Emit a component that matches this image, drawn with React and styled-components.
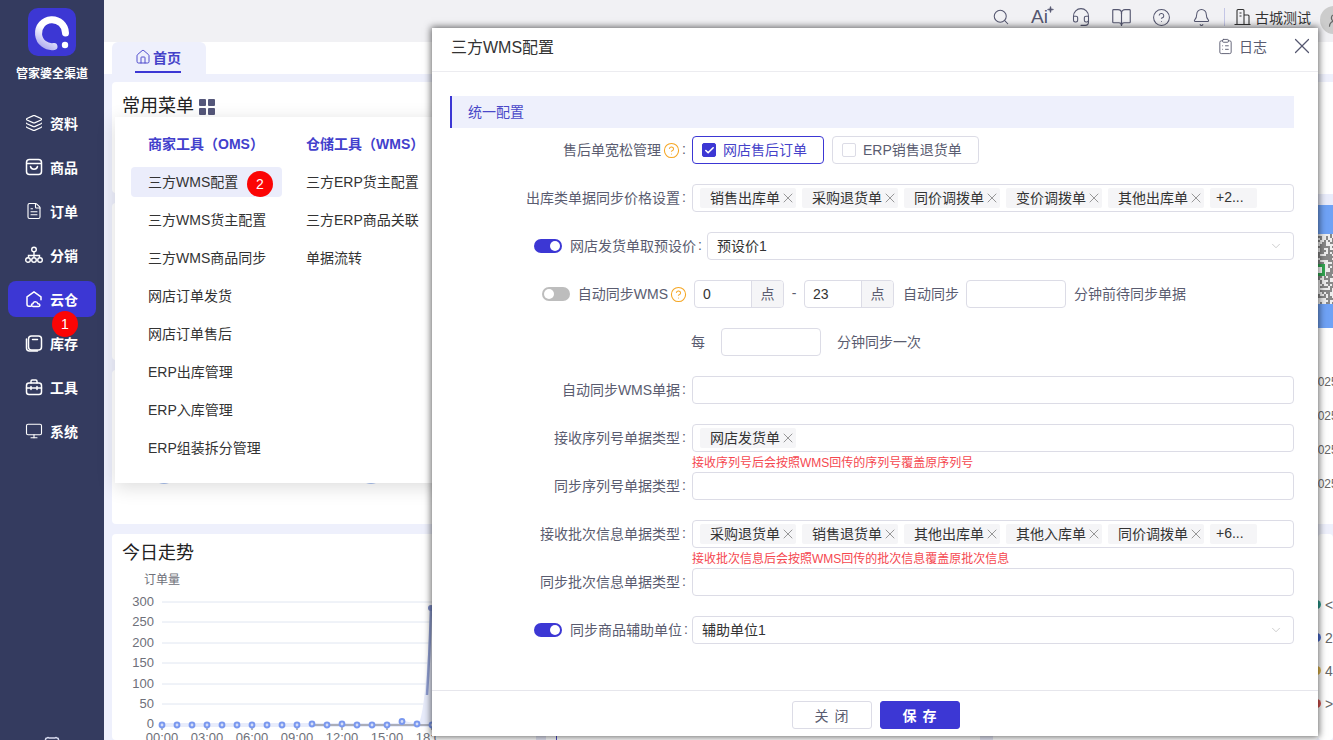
import React from "react";
import styled, { createGlobalStyle } from "styled-components";
import {
  Search, Headset, BookOpen, CircleHelp, Bell, ClipboardList, X, Layers,
  FileText, Monitor, Check, ChevronDown, House, UserRound, Sparkle,
} from "lucide-react";

const Global = createGlobalStyle`
  html, body { margin: 0; padding: 0; background: #fff; }
  * { box-sizing: border-box; }
  body { font-family: "Liberation Sans", "Noto Sans CJK SC", sans-serif; font-size: 14px; color: #333; }
`;

const Page = styled.div`
  position: relative; width: 1333px; height: 740px; overflow: hidden; display: flex;
`;
const Sidebar = styled.aside`
  width: 104px; flex: none; background: #343b5f; color: #fff;
  display: flex; flex-direction: column; align-items: center; padding-top: 8px; position: relative;
`;
const LogoBox = styled.div`width: 48px; height: 48px; border-radius: 10px; background: #3c37d4; display: flex;`;
const Brand = styled.div`font-size: 12px; font-weight: 700; line-height: 20px; margin-top: 8px; margin-bottom: 21px;`;
const NavList = styled.nav`display: flex; flex-direction: column; gap: 8px; width: 88px;`;
const NavItem = styled.div`
  height: 36px; border-radius: 8px; display: flex; align-items: center; gap: 7px; padding-left: 17px;
  font-weight: 700; font-size: 14px; background: ${p => (p.$active ? "#3c37d4" : "transparent")};
`;
const FootIcon = styled.div`margin-top: auto; height: 8px; margin-bottom: -3px; overflow: visible;`;
const Badge = styled.div`
  position: absolute; width: 26px; height: 26px; border-radius: 50%; background: #fb0505; color: #fff;
  font-size: 14px; display: flex; align-items: center; justify-content: center;
  left: ${p => p.$x}px; top: ${p => p.$y}px;
`;

const Main = styled.main`flex: 1; min-width: 0; display: flex; flex-direction: column; background: #eef0fc;`;
const TopBar = styled.header`
  height: 42px; flex: none; background: #f1f1f4; display: flex; align-items: flex-start; justify-content: flex-end;
  padding-top: 6px; color: #555770; overflow: hidden;
`;
const TopIcons = styled.div`display: flex; align-items: center; height: 22px;`;
const TopSlot = styled.span`width: 40px; display: flex; justify-content: center; align-items: center; height: 22px;`;
const AiMark = styled.span`
  font-size: 19px; line-height: 22px; color: #555770; position: relative; width: 20px; display: block;
  svg { position: absolute; right: -3px; top: 0; }
`;
const TopDivider = styled.i`width: 1px; height: 18px; background: #c4c6e6; margin: 2px 9px 0 3px;`;
const TopUser = styled.div`display: flex; align-items: center; gap: 4px; color: #333; height: 22px;`;
const Avatar = styled.div`
  width: 28px; height: 28px; border-radius: 50%; background: #ccc; margin-left: 9px; margin-right: -15px; flex: none;
  display: flex; align-items: center; justify-content: center; color: #666;
`;
const TabRow = styled.div`height: 32px; flex: none; background: #fff; padding-left: 8px; display: flex;`;
const Tab = styled.div`
  width: 94px; height: 32px; background: #eef0fc; border-radius: 6px 6px 0 0; display: flex; align-items: flex-start;
  padding-left: 23px;
`;
const TabInner = styled.div`
  display: flex; align-items: center; gap: 2px; height: 31px; width: 46px; border-bottom: 2px solid #3c37d4;
  font-weight: 700; color: #4542c9; white-space: nowrap; font-size: 14px; padding-top: 1px;
`;
const Content = styled.div`flex: 1; display: flex; padding: 8px 0 0 8px; min-height: 0;`;
const LeftCol = styled.div`flex: 1; min-width: 0; display: flex; flex-direction: column;`;
const Card = styled.section`
  background: #fff; border-radius: 4px; flex: none; height: ${p => p.$h}px; margin-bottom: 10px;
`;
const GrowCard = styled(Card)`flex: 1; height: auto; margin-bottom: 0; overflow: hidden;`;
const CardTitle = styled.h3`
  margin: 0; padding: 12px 0 0 10px; font-size: 18px; line-height: 25px; font-weight: 400; color: #222;
  display: flex; align-items: center; gap: 5px;
`;
const CardTitleTight = styled(CardTitle)`padding-top: 7px;`;
const PeekRow = styled.div`display: flex; gap: 185px; padding: 92px 0 0 41px;`;
const PeekDot = styled.i`width: 22px; height: 22px; border-radius: 50%; background: #a9c0ee; display: block;`;
const RightCol = styled.div`width: 15px; flex: none; display: flex; flex-direction: column;`;
const RightCard = styled.section`
  background: #fff; height: 442px; overflow: hidden; padding-top: 112px; margin-bottom: 10px;
`;
const Banner = styled.div`
  height: 134px; display: flex; flex-direction: column; background: #6fa2f5;
  border-top: 11px solid #e9ecfb;
`;
const BannerQr = styled.svg`display: block; margin-top: 29px;`;
const DateList = styled.div`display: flex; flex-direction: column; gap: 14px; padding-top: 44px;`;
const DateCell = styled.div`
  font-size: 12px; color: #666; line-height: 20px; text-indent: -7px; white-space: nowrap;
`;
const RightStats = styled(Card)`flex: 1; height: auto; margin: 0; padding-top: 61px;`;
const StatLine = styled.div`
  font-size: 14px; color: #666; line-height: 20px; margin-bottom: 13px; padding-left: 7px; position: relative;
`;
const StatDot = styled.i`
  position: absolute; left: -6px; top: 5px; width: 9px; height: 9px; border-radius: 50%; background: ${p => p.$c};
`;
const BottomPeek = styled.div`
  position: absolute; left: ${p => p.$x}px; top: 736px; width: ${p => p.$w}px; height: 4px; background: ${p => p.$c};
`;

const Drop = styled.div`
  position: absolute; left: 115px; top: 117px; width: 330px; height: 366px; background: #fff;
  box-shadow: 0 4px 18px rgba(0,0,0,.14); display: flex; padding: 14px 0 0 16px;
`;
const DropCol = styled.div`width: 158px; flex: none; display: flex; flex-direction: column;`;
const DropHead = styled.div`
  font-weight: 700; color: #4240cc; line-height: 26px; padding-left: 17px; margin-bottom: 10px; white-space: nowrap;
`;
const DropItem = styled.div`
  width: 151px; height: 30px; line-height: 30px; padding-left: 17px; margin-bottom: 8px; border-radius: 4px; white-space: nowrap;
  background: ${p => (p.$active ? "#ebedfb" : "transparent")}; color: #333;
`;

const Modal = styled.div`
  position: absolute; left: 432px; top: 28px; width: 886px; height: 708px; background: #fff;
  box-shadow: 0 0 7px 1px rgba(0,0,0,.6); display: flex; flex-direction: column;
`;
const ModalHead = styled.div`
  height: 44px; flex: none; border-bottom: 1px solid #ececf0; display: flex; align-items: center; padding: 0 3px 7px 19px; color: #333;
`;
const ModalTitle = styled.div`font-size: 16px; flex: 1;`;
const LogLink = styled.div`display: flex; align-items: center; gap: 5px; color: #5a5c70; margin-right: 22px;`;
const CloseBtn = styled.div`display: flex; color: #555770;`;
const ModalBody = styled.div`flex: 1; padding: 24px 24px 0 18px; display: flex; flex-direction: column;`;
const Section = styled.div`
  height: 32px; line-height: 32px; background: #eef0fc; border-left: 2px solid #3c37d4; padding-left: 16px; color: #4a48c8; margin-bottom: 8px;
`;
const Row = styled.div`
  display: flex; align-items: flex-start; gap: ${p => p.$gap ?? 6}px; margin-bottom: ${p => p.$mb ?? 20}px;
`;
const Label = styled.div`
  width: ${p => p.$w ?? 236}px; flex: none; height: 28px; display: flex; align-items: center; justify-content: flex-end;
  color: #5a5c70; white-space: nowrap; padding-bottom: 2px;
`;
const Colon = styled.span`margin-left: 2px;`;
const Help = styled.span`display: inline-flex; color: #f5a623; margin: 2px 0 0 2px;`;
const Toggle = styled.span`
  width: 28px; height: 14px; border-radius: 7px; flex: none; margin: 2px 8px 0 0; position: relative; display: block;
  background: ${p => (p.$on ? "#3c37d4" : "#bdbdbd")};
  &::after {
    content: ""; position: absolute; top: 2px; width: 10px; height: 10px; border-radius: 50%; background: #fff;
    left: ${p => (p.$on ? "16px" : "2px")};
  }
`;
const Field = styled.div`flex: 1; min-width: 0; display: flex; flex-direction: column;`;
const BoxInput = styled.div`
  height: 28px; border: 1px solid #dcdce6; border-radius: 4px; background: #fff; display: flex; align-items: center;
  padding-left: 7px; gap: 6px; color: #333; overflow: hidden;
`;
const SelectBox = styled(BoxInput)`
  padding: 0 10px 2px 9px; justify-content: space-between; color: #333;
  svg { margin-top: 2px; }
`;
const Tag = styled.span`
  height: 20px; width: 96px; background: #f5f5f7; border-radius: 2px; display: inline-flex; align-items: center; padding: 0 0 2px 10px; white-space: nowrap; flex: none;
  color: #333; svg { color: #666; flex: none; margin-top: 2px; }
`;
const MoreTag = styled(Tag)`padding: 0 0 2px 6px; width: 47px;`;
const Hint = styled.div`height: 20px; line-height: 22px; font-size: 12px; color: #f5474f;`;
const CheckGroup = styled.div`display: flex; gap: 8px;`;
const CheckCard = styled.div`
  height: 28px; border: 1px solid ${p => (p.$on ? "#3c37d4" : "#dcdce6")}; border-radius: 4px; display: flex; align-items: center;
  padding: 0 16px 2px 9px; gap: 7px; color: ${p => (p.$on ? "#4542c9" : "#5a5c70")}; white-space: nowrap;
`;
const CheckMark = styled.span`
  width: 14px; height: 14px; border-radius: 2px; display: flex; align-items: center; justify-content: center; color: #fff; margin-top: 2px;
  background: ${p => (p.$on ? "#3c37d4" : "#fff")}; border: 1px solid ${p => (p.$on ? "#3c37d4" : "#dcdce6")};
`;
const Inline = styled.div`display: flex; align-items: center; height: 28px; color: #5a5c70; white-space: nowrap;`;
const Addon = styled.div`
  display: flex; height: 28px; width: 90px; border: 1px solid #dcdce6; border-radius: 4px; overflow: hidden; color: #333; flex: none;
`;
const AddonVal = styled.div`flex: 1; display: flex; align-items: center; padding: 0 0 1px 8px;`;
const AddonEnd = styled.div`
  width: 32px; background: #f5f5f7; border-left: 1px solid #dcdce6; display: flex; align-items: center; justify-content: center; color: #5a5c70; padding-bottom: 2px;
`;
const DashGap = styled.span`width: 20px; text-align: center; color: #5a5c70; flex: none; margin-top: -2px;`;
const Plain = styled.div`
  width: 100px; height: 28px; border: 1px solid #dcdce6; border-radius: 4px; flex: none;
  margin: 0 ${p => p.$mr ?? 8}px 0 ${p => p.$ml ?? 7}px;
`;
const InlineText = styled.span`margin: -2px 0 0 ${p => p.$ml ?? 0}px;`;
const ModalFoot = styled.div`
  height: 46px; flex: none; border-top: 1px solid #e6e6ec; display: flex; align-items: flex-start; justify-content: center;
  gap: 8px; padding: 10px 0 0 2px;
`;
const FootBtn = styled.button`
  width: 80px; height: 28px; border-radius: 3px; font: inherit; font-size: 14px; letter-spacing: 1px; padding: 0 0 1px;
  border: 1px solid ${p => (p.$primary ? "#3c37d4" : "#dcdce6")};
  background: ${p => (p.$primary ? "#3c37d4" : "#fff")};
  color: ${p => (p.$primary ? "#fff" : "#5a5c70")};
  font-weight: ${p => (p.$primary ? 700 : 400)};
`;
const ChartSvg = styled.svg`display: block; margin-top: 4px;`;

const IconShop = () => (
  <svg width="18" height="18" viewBox="0 0 18 18" fill="none" stroke="#fff" strokeWidth="1.5">
    <rect x="1.5" y="1.5" width="15" height="15" rx="3" />
    <path d="M2 5.5h14M5.5 8.5c.8 3.6 6.200 3.600 7 0" strokeLinecap="round" />
  </svg>
);
const IconNet = () => (
  <svg width="18" height="18" viewBox="0 0 18 18" fill="none" stroke="#fff" strokeWidth="1.4">
    <circle cx="9" cy="3.500" r="2.300" /><circle cx="3" cy="14" r="2.300" /><circle cx="9" cy="14" r="2.300" /><circle cx="15" cy="14" r="2.300" />
    <path d="M9 6v5.500M3.500 11.500V9.500h11v2" />
  </svg>
);
const IconCloud = () => (
  <svg width="18" height="18" viewBox="0 0 18 18" fill="none" stroke="#fff" strokeWidth="1.5" strokeLinecap="round" strokeLinejoin="round">
    <path d="M6 16.200H4a2 2 0 0 1-2-2V6.800l7-5 7 5v3" />
    <path d="M8 16.500c-2 0-2-2.800 0-2.800.3-2.500 4.400-2.500 4.800 0 2.200-.3 3 2.800.5 2.800z" />
  </svg>
);
const IconStock = () => (
  <svg width="18" height="18" viewBox="0 0 18 18" fill="none" stroke="#fff" strokeWidth="1.5" strokeLinecap="round">
    <rect x="3.500" y="2" width="13" height="14" rx="3" />
    <path d="M1.500 5v9a3 3 0 0 0 3 3h8M7.500 5.500h5" />
  </svg>
);
const IconBox = () => (
  <svg width="18" height="18" viewBox="0 0 18 18" fill="none" stroke="#fff" strokeWidth="1.5" strokeLinecap="round">
    <rect x="1.500" y="5" width="15" height="11.500" rx="2.500" />
    <path d="M6 5V3.200C6 2.500 6.500 2 7.200 2h3.600c.7 0 1.200.5 1.200 1.200V5M1.500 10h15M6 8.500v3M12 8.500v3" />
  </svg>
);
const IconBear = () => (
  <svg width="16" height="16" viewBox="0 0 16 16" fill="none" stroke="#d9dcf0" strokeWidth="1.500">
    <path d="M3 3c-2 0-2 3 0 3v6a3 3 0 0 0 3 3h4a3 3 0 0 0 3-3V6c2 0 2-3 0-3-1-1-2 0-2 0H5S4 2 3 3z" />
  </svg>
);
const IconBuilding = () => (
  <svg width="17" height="18" viewBox="0 0 17 18" fill="none" stroke="currentColor" strokeWidth="1.1">
    <path d="M3 16.500V2.500C3 1.900 3.400 1.500 4 1.500h5c.6 0 1 .4 1 1v14M10 7h4c.6 0 1 .4 1 1v8.500M.5 16.500h16M5.500 5h2M5.500 8h2" />
  </svg>
);
const Logo = () => (
  <svg width="48" height="48" viewBox="0 0 48 48" fill="none">
    <defs>
      <linearGradient id="lg" x1="0" y1="1" x2="0.6" y2="0">
        <stop offset="0" stopColor="#a9a6ee" />
        <stop offset="0.6" stopColor="#fff" />
      </linearGradient>
    </defs>
    <path d="M26 38.500A13.500 13.500 0 1 1 37.500 25" stroke="url(#lg)" strokeWidth="7" strokeLinecap="round" />
    <circle cx="37" cy="37" r="3.200" fill="#fff" />
  </svg>
);
const Grid4 = () => (
  <svg width="16" height="16" viewBox="0 0 16 16" fill="#55577a">
    <rect width="7" height="7" rx="1" /><rect x="9" width="7" height="7" rx="1" />
    <rect y="9" width="7" height="7" rx="1" /><rect x="9" y="9" width="7" height="7" rx="1" />
  </svg>
);

const qrCells = [];
for (let r = 0; r < 35; r++) {
  for (let c = 0; c < 8; c++) {
    const n = Math.sin(r * 12.9898 + c * 78.233) * 43758.5453;
    if (n - Math.floor(n) > 0.5) qrCells.push([c, r]);
  }
}
const QrStrip = () => (
  <BannerQr width="15" height="70" viewBox="0 0 15 70">
    <rect width="15" height="70" fill="#eee" />
    {qrCells.map(([c, r]) => <rect key={`${c}-${r}`} x={c * 2} y={r * 2} width="2" height="2" fill="#888" />)}
    <rect y="30" width="7" height="12" fill="#34a853" />
    <rect x="0" y="33" width="4" height="6" fill="#fff" />
  </BannerQr>
);

const chartRows = [[300, 32], [250, 52], [200, 73], [150, 93], [100, 114], [50, 134]];
const BASE = 155;
const pts = Array.from({ length: 19 }, (_, k) => {
  const v = { 10: 1, 12: 1, 16: 3.500, 17: 1 }[k] || 0;
  return [50 + 15 * k, BASE - v];
});
const Chart = () => (
  <ChartSvg width="325" height="175" viewBox="0 0 325 175">
    <text x="32" y="14" fontSize="12" fill="#6e7079">订单量</text>
    {chartRows.map(([v, y]) => (
      <g key={v}>
        <line x1="50" x2="325" y1={y} y2={y} stroke="#e0e6f1" />
        <text x="42" y={y + 4} fontSize="13" textAnchor="end" fill="#6e7079">{v}</text>
      </g>
    ))}
    <text x="42" y={BASE + 3} fontSize="13" textAnchor="end" fill="#6e7079">0</text>
    <path d={`M50 ${BASE + 2}V${BASE - 2}H285L293 ${BASE - 4}L305 ${BASE - 1}C312 ${BASE} 315 100 319 38L325 ${BASE + 2}Z`} fill="#e8ecfb" />
    <path d={`M200 ${BASE}H320`} stroke="#6e7079" />
    {[0, 1, 2, 3, 4, 5, 6].map(i => <line key={i} x1={50 + 45 * i} x2={50 + 45 * i} y1={BASE} y2={BASE + 5} stroke="#6e7079" />)}
    {["00:00", "03:00", "06:00", "09:00", "12:00", "15:00", "18:00", "21:00"].map((t, i) => (
      <text key={t} x={50 + 45 * i} y="172" fontSize="13" textAnchor="middle" fill="#6e7079">{t}</text>
    ))}
    <path d={`M315 ${BASE - 30}C316 110 318 70 319 38`} stroke="#8f9ed2" strokeWidth="2.500" fill="none" />
    {pts.map(([x, y]) => <circle key={x} cx={x} cy={y} r="2.400" fill="#d6def8" stroke="#7a98ef" strokeWidth="2" />)}
    <circle cx="319" cy="38" r="3" fill="#7c8cc8" />
  </ChartSvg>
);

const TagX = () => <X size={16} strokeWidth={1} />;
const Tags = ({ items, more }) => (
  <BoxInput>
    {items.map(t => <Tag key={t}>{t}<TagX /></Tag>)}
    {more && <MoreTag>{more}</MoreTag>}
  </BoxInput>
);
const HelpIcon = () => <Help><CircleHelp size={17} strokeWidth={1.5} /></Help>;

const nav = [
  ["资料", <Layers size={18} strokeWidth={1.5} />],
  ["商品", <IconShop />],
  ["订单", <FileText size={18} strokeWidth={1.5} />],
  ["分销", <IconNet />],
  ["云仓", <IconCloud />, true],
  ["库存", <IconStock />],
  ["工具", <IconBox />],
  ["系统", <Monitor size={18} strokeWidth={1.5} />],
];
const col1 = ["三方WMS配置", "三方WMS货主配置", "三方WMS商品同步", "网店订单发货", "网店订单售后", "ERP出库管理", "ERP入库管理", "ERP组装拆分管理"];
const col2 = ["三方ERP货主配置", "三方ERP商品关联", "单据流转"];

export default function App() {
  return (
    <Page>
      <Global />
      <Sidebar>
        <LogoBox><Logo /></LogoBox>
        <Brand>管家婆全渠道</Brand>
        <NavList>
          {nav.map(([t, ic, a]) => <NavItem key={t} $active={a}>{ic}<span>{t}</span></NavItem>)}
        </NavList>
        <FootIcon><IconBear /></FootIcon>
      </Sidebar>
      <Main>
        <TopBar>
          <TopIcons>
            <TopSlot><Search size={18} strokeWidth={1.4} /></TopSlot>
            <TopSlot><AiMark>Ai<Sparkle size={7} fill="currentColor" /></AiMark></TopSlot>
            <TopSlot><Headset size={20} strokeWidth={1.3} /></TopSlot>
            <TopSlot><BookOpen size={21} strokeWidth={1.3} /></TopSlot>
            <TopSlot><CircleHelp size={19} strokeWidth={1.3} /></TopSlot>
            <TopSlot><Bell size={19} strokeWidth={1.3} /></TopSlot>
          </TopIcons>
          <TopDivider />
          <TopUser>
            <IconBuilding />
            <span>古城测试</span>
          </TopUser>
          <Avatar><UserRound size={15} /></Avatar>
        </TopBar>
        <TabRow>
          <Tab><TabInner><House size={16} strokeWidth={1.4} />首页</TabInner></Tab>
        </TabRow>
        <Content>
          <LeftCol>
            <Card $h={111}><CardTitle>常用菜单 <Grid4 /></CardTitle></Card>
            <Card $h={157} />
            <Card $h={154}><PeekRow><PeekDot /><PeekDot /></PeekRow></Card>
            <GrowCard>
              <CardTitleTight>今日走势</CardTitleTight>
              <Chart />
            </GrowCard>
          </LeftCol>
          <RightCol>
            <RightCard>
              <Banner><QrStrip /></Banner>
              <DateList>
                <DateCell>2025</DateCell>
                <DateCell>2025</DateCell>
                <DateCell>2025</DateCell>
                <DateCell>2025</DateCell>
              </DateList>
            </RightCard>
            <RightStats>
              <StatLine><StatDot $c="#2a9d8f" />&lt;</StatLine>
              <StatLine><StatDot $c="#4a6cd4" />2</StatLine>
              <StatLine><StatDot $c="#e5b94c" />4</StatLine>
              <StatLine><StatDot $c="#d9534f" />&gt;</StatLine>
            </RightStats>
          </RightCol>
        </Content>
      </Main>

      <Badge $x={52} $y={311}>1</Badge>
      <Drop>
        <DropCol>
          <DropHead>商家工具（OMS）</DropHead>
          {col1.map((t, i) => <DropItem key={t} $active={i === 0}>{t}</DropItem>)}
        </DropCol>
        <DropCol>
          <DropHead>仓储工具（WMS）</DropHead>
          {col2.map(t => <DropItem key={t}>{t}</DropItem>)}
        </DropCol>
      </Drop>
      <Badge $x={247} $y={171}>2</Badge>
      <BottomPeek $x={536} $w={10} $c="#e4e6f5" />
      <BottomPeek $x={556} $w={1} $c="#4a48c8" />
      <BottomPeek $x={980} $w={13} $c="#e4e6f5" />

      <Modal>
        <ModalHead>
          <ModalTitle>三方WMS配置</ModalTitle>
          <LogLink><ClipboardList size={17} strokeWidth={1.3} />日志</LogLink>
          <CloseBtn><X size={26} strokeWidth={1.1} /></CloseBtn>
        </ModalHead>
        <ModalBody>
          <Section>统一配置</Section>
          <Row>
            <Label>售后单宽松管理<HelpIcon /><Colon>:</Colon></Label>
            <CheckGroup>
              <CheckCard $on><CheckMark $on><Check size={11} strokeWidth={3.5} /></CheckMark>网店售后订单</CheckCard>
              <CheckCard><CheckMark />ERP销售退货单</CheckCard>
            </CheckGroup>
          </Row>
          <Row>
            <Label>出库类单据同步价格设置<Colon>:</Colon></Label>
            <Field><Tags items={["销售出库单", "采购退货单", "同价调拨单", "变价调拨单", "其他出库单"]} more="+2..." /></Field>
          </Row>
          <Row $gap={5}>
            <Label $w={252}><Toggle $on />网店发货单取预设价<Colon>:</Colon></Label>
            <Field><SelectBox>预设价1<ChevronDown size={14} strokeWidth={1} color="#aaa" /></SelectBox></Field>
          </Row>
          <Row $gap={7}>
            <Label $w={237}><Toggle />自动同步WMS<HelpIcon /></Label>
            <Inline>
              <Addon><AddonVal>0</AddonVal><AddonEnd>点</AddonEnd></Addon>
              <DashGap>-</DashGap>
              <Addon><AddonVal>23</AddonVal><AddonEnd>点</AddonEnd></Addon>
              <InlineText $ml={9}>自动同步</InlineText>
              <Plain />
              <InlineText>分钟前待同步单据</InlineText>
            </Inline>
          </Row>
          <Row $gap={0}>
            <Label $w={255}>每</Label>
            <Inline>
              <Plain $ml={16} $mr={16} />
              <InlineText>分钟同步一次</InlineText>
            </Inline>
          </Row>
          <Row>
            <Label>自动同步WMS单据<Colon>:</Colon></Label>
            <Field><BoxInput /></Field>
          </Row>
          <Row $mb={0}>
            <Label>接收序列号单据类型<Colon>:</Colon></Label>
            <Field>
              <Tags items={["网店发货单"]} />
              <Hint>接收序列号后会按照WMS回传的序列号覆盖原序列号</Hint>
            </Field>
          </Row>
          <Row>
            <Label>同步序列号单据类型<Colon>:</Colon></Label>
            <Field><BoxInput /></Field>
          </Row>
          <Row $mb={0}>
            <Label>接收批次信息单据类型<Colon>:</Colon></Label>
            <Field>
              <Tags items={["采购退货单", "销售退货单", "其他出库单", "其他入库单", "同价调拨单"]} more="+6..." />
              <Hint>接收批次信息后会按照WMS回传的批次信息覆盖原批次信息</Hint>
            </Field>
          </Row>
          <Row>
            <Label>同步批次信息单据类型<Colon>:</Colon></Label>
            <Field><BoxInput /></Field>
          </Row>
          <Row $gap={4}>
            <Label $w={238}><Toggle $on />同步商品辅助单位<Colon>:</Colon></Label>
            <Field><SelectBox>辅助单位1<ChevronDown size={14} strokeWidth={1} color="#aaa" /></SelectBox></Field>
          </Row>
        </ModalBody>
        <ModalFoot>
          <FootBtn>关 闭</FootBtn>
          <FootBtn $primary>保 存</FootBtn>
        </ModalFoot>
      </Modal>
    </Page>
  );
}
